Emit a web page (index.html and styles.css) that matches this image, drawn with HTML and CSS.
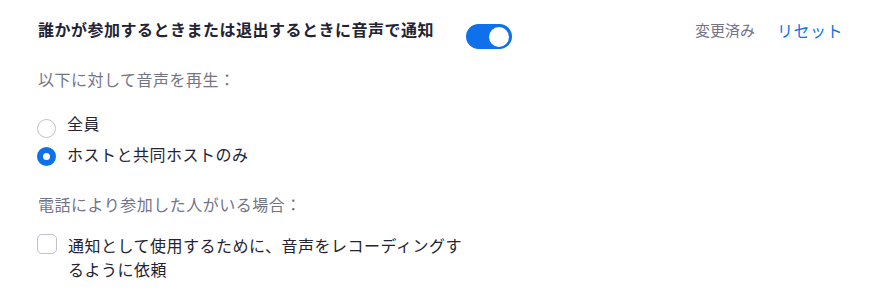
FILE: index.html
```html
<!DOCTYPE html>
<html>
<head>
    <meta charset="UTF-8">
    <title>音声通知設定</title>
    <link rel="stylesheet" href="styles.css">
</head>
<body>
    <div class="setting">
        <!-- Header row -->
        <div class="setting-header">
            <div class="setting-title">誰かが参加するときまたは退出するときに音声で通知</div>
            <span class="toggle on"><span class="knob"></span></span>
            <div class="setting-actions">
                <span class="modified">変更済み</span>
                <a class="reset" href="#">リセット</a>
            </div>
        </div>

        <!-- Play sound for -->
        <div class="sub-label">以下に対して音声を再生：</div>
        <div class="option-list">
            <label class="option">
                <span class="radio"></span>
                <span class="option-text">全員</span>
            </label>
            <label class="option">
                <span class="radio checked"></span>
                <span class="option-text">ホストと共同ホストのみ</span>
            </label>
        </div>

        <!-- Phone users -->
        <div class="sub-label phone">電話により参加した人がいる場合：</div>
        <label class="option check-option">
            <span class="checkbox"></span>
            <span class="option-text wrap">通知として使用するために、音声をレコーディングするように依頼</span>
        </label>
    </div>
</body>
</html>
```

FILE: styles.css
```css
body {
    margin: 0;
    background-color: #fff;
    font-family: "Noto Sans CJK JP", "Noto Sans", sans-serif;
    font-size: 16px;
    letter-spacing: 0.5px;
    color: #232333;
}

.setting {
    padding: 17px 38px 0 38px;
}

.setting-header {
    display: flex;
    align-items: flex-start;
    height: 24px;
    line-height: 24px;
}

.setting-title {
    width: 428px;
    font-weight: 700;
}

/* Toggle switch */
.toggle {
    display: block;
    width: 46px;
    height: 25px;
    margin-top: 7px;
    border-radius: 13px;
    background-color: #0e71eb;
    position: relative;
}

.toggle .knob {
    position: absolute;
    right: 3px;
    top: 2.5px;
    width: 20px;
    height: 20px;
    border-radius: 50%;
    background-color: #fff;
}

.setting-actions {
    margin-left: auto;
    display: flex;
    gap: 22px;
    margin-top: 1px;
}

.modified {
    font-size: 15px;
    letter-spacing: 0;
    color: #747487;
}

.reset {
    color: #0e71eb;
    text-decoration: none;
}

.sub-label {
    margin-top: 26px;
    line-height: 24px;
    color: #747487;
}

.option-list {
    margin-top: 20px;
    display: flex;
    flex-direction: column;
    gap: 7px;
}

.option {
    display: flex;
    align-items: flex-start;
    gap: 11px;
    line-height: 24px;
}

.option-text {
    display: block;
}

.option-text.wrap {
    width: 400px;
}

/* Radio buttons */
.radio {
    flex: none;
    box-sizing: border-box;
    width: 19px;
    height: 19px;
    margin: 8px 0 -8px -1px;
    border: 1px solid #c1c1cf;
    border-radius: 50%;
    background-color: #fff;
}

.radio.checked {
    border: 6px solid #0e71eb;
    margin-top: 5px;
    margin-bottom: -5px;
}

/* Checkbox */
.check-option {
    margin-top: 17px;
}

.checkbox {
    flex: none;
    box-sizing: border-box;
    width: 20px;
    height: 20px;
    margin: 1px 0 0 -1px;
    border: 1px solid #c1c1cf;
    border-radius: 5px;
    background-color: #fff;
}
```
